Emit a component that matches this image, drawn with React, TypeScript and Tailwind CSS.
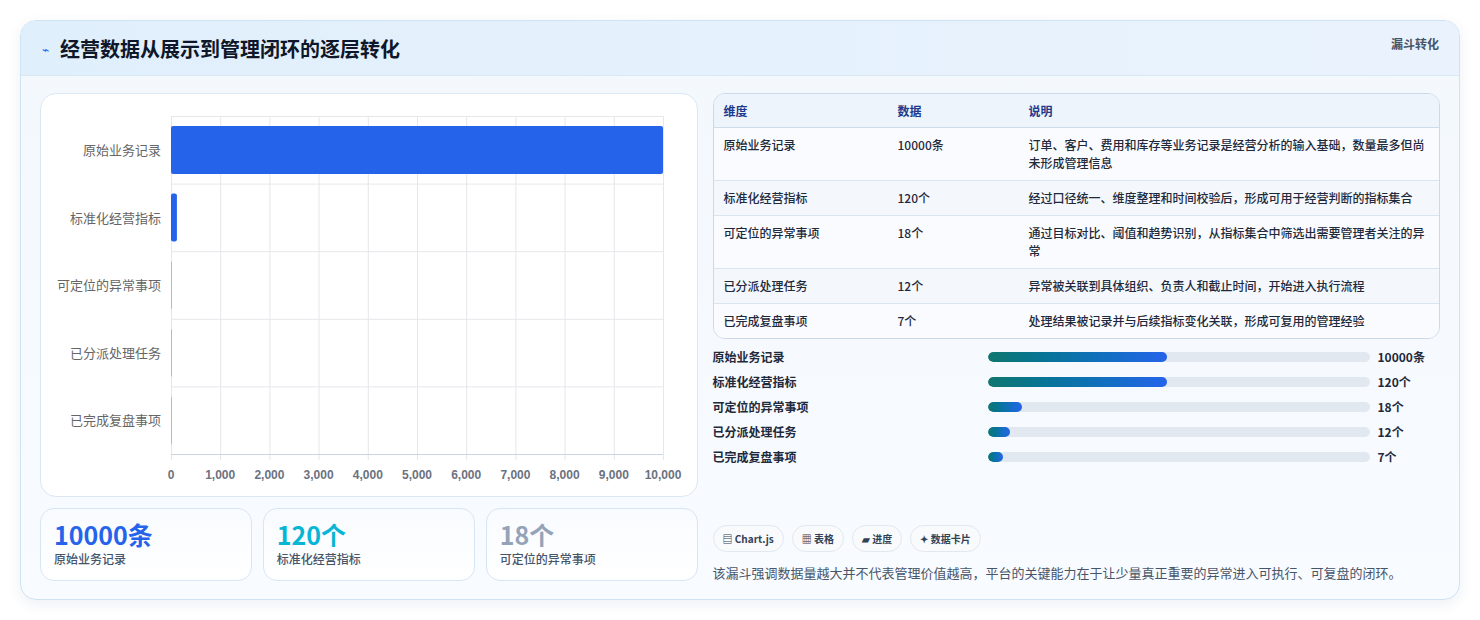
import React from "react";

const rows = [
  { name: "原始业务记录", v: 10000, txt: "10000条", desc: "订单、客户、费用和库存等业务记录是经营分析的输入基础，数量最多但尚未形成管理信息" },
  { name: "标准化经营指标", v: 120, txt: "120个", desc: "经过口径统一、维度整理和时间校验后，形成可用于经营判断的指标集合" },
  { name: "可定位的异常事项", v: 18, txt: "18个", desc: "通过目标对比、阈值和趋势识别，从指标集合中筛选出需要管理者关注的异常" },
  { name: "已分派处理任务", v: 12, txt: "12个", desc: "异常被关联到具体组织、负责人和截止时间，开始进入执行流程" },
  { name: "已完成复盘事项", v: 7, txt: "7个", desc: "处理结果被记录并与后续指标变化关联，形成可复用的管理经验" },
];
const prog = [47, 47, 9, 6, 4];

function Chart() {
  const W = 492, H = 338, rowH = H / 5;
  return (
    <div className="flex h-full">
      <div className="w-[130px] flex flex-col pt-[22px] h-[338px] box-content">
        {rows.map((r) => (
          <div key={r.name} className="flex-1 flex items-center justify-end pr-[10px] text-[13px] text-[#666]">{r.name}</div>
        ))}
      </div>
      <div className="flex flex-col pt-[22px]">
        <svg width={W + 10} height={H + 8} className="overflow-visible">
          {Array.from({ length: 11 }).map((_, i) => (
            <line key={i} x1={i * W / 10 + 0.5} x2={i * W / 10 + 0.5} y1={0} y2={H + 6} stroke="#e5e7eb" />
          ))}
          {Array.from({ length: 6 }).map((_, i) => (
            <line key={i} x1={0} x2={W} y1={i * rowH + 0.5} y2={i * rowH + 0.5} stroke={i === 5 ? "#cbd5e1" : "#e5e7eb"} />
          ))}
          {rows.map((r, i) => (
            <rect key={i} x={0} y={i * rowH + 10} width={Math.max(1, (r.v / 10000) * W)} height={48} rx={2} fill="#2563eb" fillOpacity={r.v < 100 ? 0.35 : 1} />
          ))}
        </svg>
        <div className="relative h-[20px] w-[492px] mt-[4px] text-[12px] font-semibold text-[#6b7280]" style={{ fontFamily: "'Liberation Sans', sans-serif" }}>
          {Array.from({ length: 11 }).map((_, i) => (
            <span key={i} className="absolute -translate-x-1/2" style={{ left: (i * W) / 10 }}>{(i * 1000).toLocaleString("en-US")}</span>
          ))}
        </div>
      </div>
    </div>
  );
}

export default function App() {
  return (
    <div className="w-[1480px] h-[620px] bg-white pt-[20px] px-[20px]" style={{ fontFamily: "'Noto Sans CJK SC', 'Noto Sans', sans-serif" }}>
      <div className="h-[580px] rounded-[16px] border border-[#cfe3f3] bg-gradient-to-b from-[#f3f8fd] to-[#f8fbff] shadow-[0_4px_14px_rgba(30,64,120,0.08)] overflow-hidden">
        <div className="h-[55px] bg-gradient-to-r from-[#e0effc] to-[#eaf3fd] border-b border-[#d9e8f5] flex items-start justify-between pl-[21px] pr-[20px]">
          <div className="flex items-center gap-[11px] h-[55px]">
            <span className="text-[#2563eb] text-[12px]">⌁</span>
            <span className="text-[20px] font-bold text-[#0f172a]">经营数据从展示到管理闭环的逐层转化</span>
          </div>
          <span className="mt-[14px] text-[12px] font-bold text-[#475569]">漏斗转化</span>
        </div>
        <div className="flex gap-[15px] px-[19px] pt-[17px]">
          <div className="w-[658px] flex flex-col gap-[11px]">
            <div className="h-[404px] bg-white rounded-[16px] border border-[#dbe7f3]">
              <Chart />
            </div>
            <div className="flex gap-[11px]">
              {[
                ["10000条", "text-[#2563eb]", "原始业务记录"],
                ["120个", "text-[#06b6d4]", "标准化经营指标"],
                ["18个", "text-[#94a3b8]", "可定位的异常事项"],
              ].map(([v, c, l]) => (
                <div key={l} className="flex-1 h-[73px] rounded-[14px] border border-[#d8e6f4] bg-gradient-to-b from-[#f8fbff] to-white px-[13px] pt-[9px]">
                  <div className={`text-[25px] leading-[32px] font-bold ${c}`}>{v}</div>
                  <div className="text-[12px] text-[#475569] font-medium">{l}</div>
                </div>
              ))}
            </div>
          </div>
          <div className="w-[728px] flex flex-col">
            <div className="rounded-[12px] border border-[#cbd9e8] overflow-hidden bg-[#f8fbfe] text-[12px]">
              <div className="flex h-[34px] items-center bg-[#eef4fc] border-b border-[#cfdcea] font-bold text-[#1e3a8a]">
                <div className="w-[184px] pl-[10px]">维度</div>
                <div className="w-[131px]">数据</div>
                <div className="flex-1">说明</div>
              </div>
              {rows.map((r, i) => (
                <div key={r.name} className={`flex py-[8px] leading-[18px] font-medium text-[#1e293b] ${i < 4 ? "border-b border-[#dbe5ef]" : ""} ${i % 2 === 1 ? "bg-[#f4f8fc]" : "bg-[#f9fbfe]"}`}>
                  <div className="w-[184px] pl-[10px]">{r.name}</div>
                  <div className="w-[131px]">{r.txt}</div>
                  <div className="flex-1 pr-[14px]">{r.desc}</div>
                </div>
              ))}
            </div>
            <div className="flex flex-col mt-[9px] gap-[7px]">
              {rows.map((r, i) => (
                <div key={r.name} className="flex items-center h-[18px] text-[12px] font-bold text-[#1e293b]">
                  <div className="w-[275px]">{r.name}</div>
                  <div className="w-[382px] h-[10px] rounded-full bg-[#e2e8f0] overflow-hidden">
                    <div className="h-full rounded-full bg-gradient-to-r from-[#0f766e] to-[#2563eb]" style={{ width: `${prog[i]}%` }} />
                  </div>
                  <div className="ml-[8px]">{r.txt}</div>
                </div>
              ))}
            </div>
            <div className="flex gap-[8px] mt-[59px]">
              {["▤ Chart.js", "▦ 表格", "▰ 进度", "✦ 数据卡片"].map((t) => (
                <span key={t} className="h-[27px] px-[9px] flex items-center rounded-full border border-[#e2e8f0] bg-[#f8fafc] text-[10px] font-bold text-[#334155]">{t}</span>
              ))}
            </div>
            <div className="mt-[11px] text-[13px] text-[#475569]">该漏斗强调数据量越大并不代表管理价值越高，平台的关键能力在于让少量真正重要的异常进入可执行、可复盘的闭环。</div>
          </div>
        </div>
      </div>
    </div>
  );
}
